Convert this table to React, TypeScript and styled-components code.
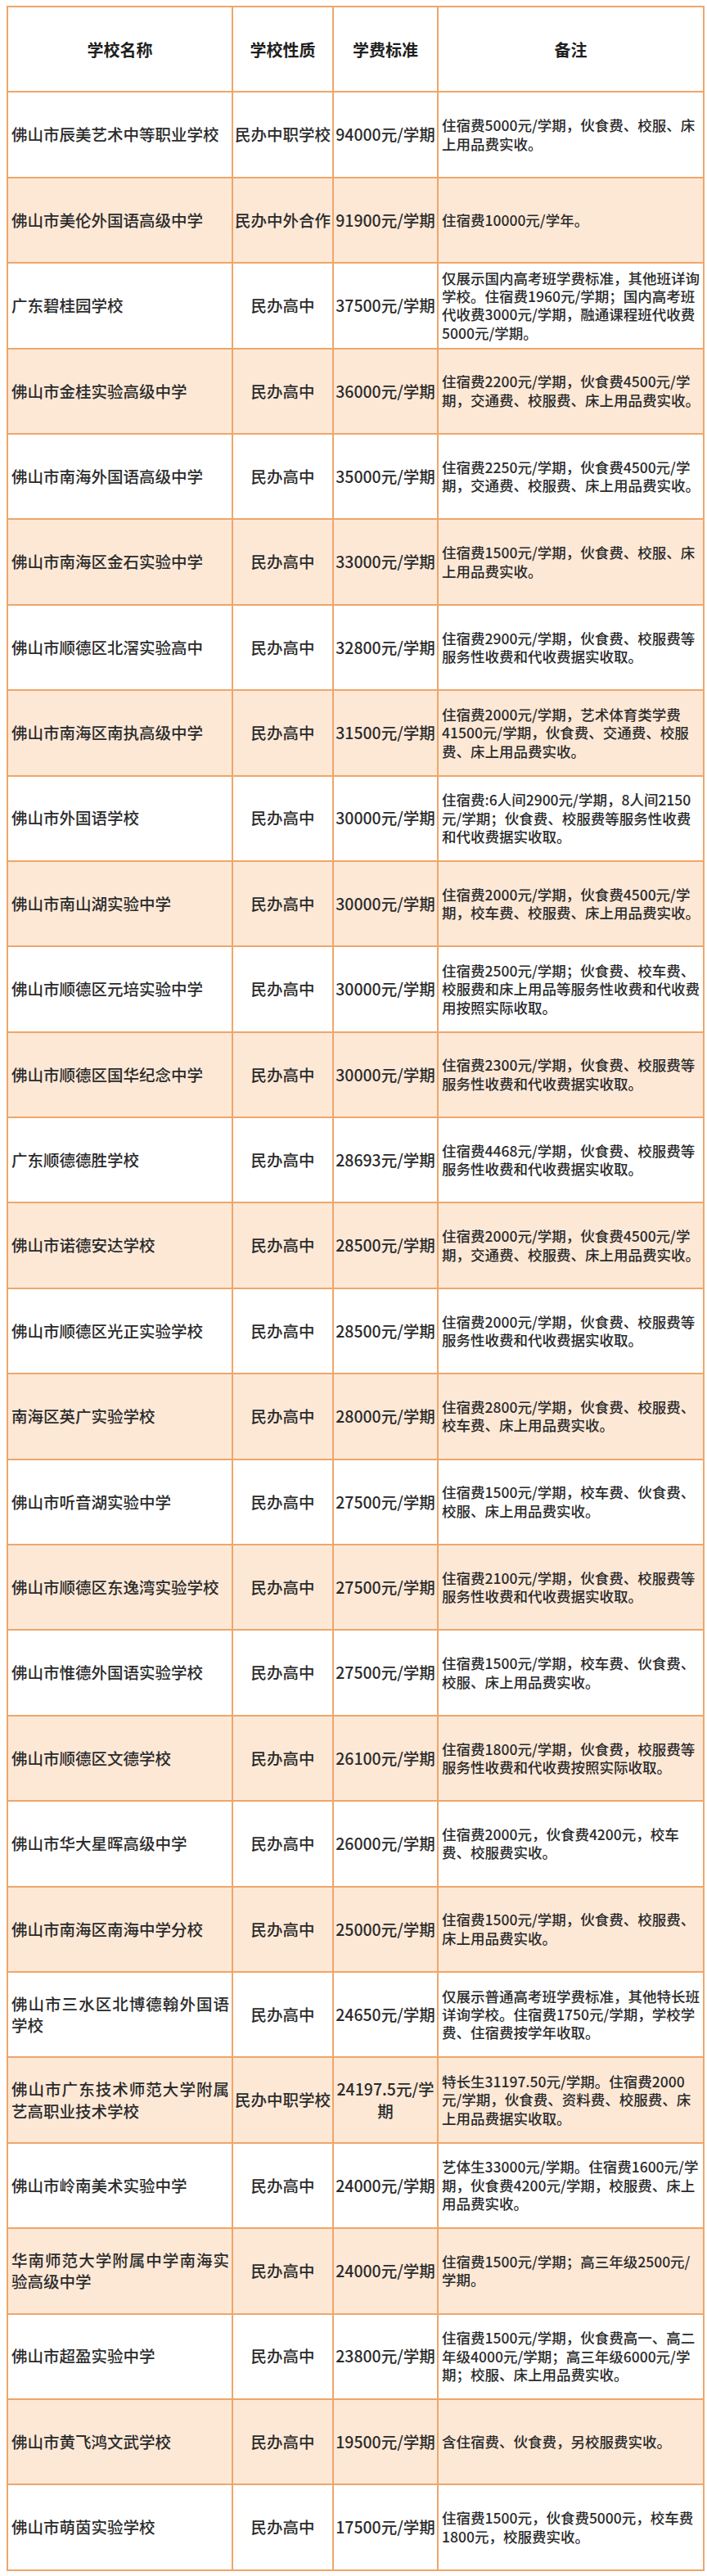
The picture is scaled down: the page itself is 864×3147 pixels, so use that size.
import styled, { createGlobalStyle } from "styled-components";

type School = {
    name: string;
    kind: string;
    fee: string;
    note: string;
};

const schools: School[] = [
    { name: "佛山市辰美艺术中等职业学校", kind: "民办中职学校", fee: "94000元/学期", note: "住宿费5000元/学期，伙食费、校服、床上用品费实收。" },
    { name: "佛山市美伦外国语高级中学", kind: "民办中外合作", fee: "91900元/学期", note: "住宿费10000元/学年。" },
    { name: "广东碧桂园学校", kind: "民办高中", fee: "37500元/学期", note: "仅展示国内高考班学费标准，其他班详询学校。住宿费1960元/学期；国内高考班代收费3000元/学期，融通课程班代收费5000元/学期。" },
    { name: "佛山市金桂实验高级中学", kind: "民办高中", fee: "36000元/学期", note: "住宿费2200元/学期，伙食费4500元/学期，交通费、校服费、床上用品费实收。" },
    { name: "佛山市南海外国语高级中学", kind: "民办高中", fee: "35000元/学期", note: "住宿费2250元/学期，伙食费4500元/学期，交通费、校服费、床上用品费实收。" },
    { name: "佛山市南海区金石实验中学", kind: "民办高中", fee: "33000元/学期", note: "住宿费1500元/学期，伙食费、校服、床上用品费实收。" },
    { name: "佛山市顺德区北滘实验高中", kind: "民办高中", fee: "32800元/学期", note: "住宿费2900元/学期，伙食费、校服费等服务性收费和代收费据实收取。" },
    { name: "佛山市南海区南执高级中学", kind: "民办高中", fee: "31500元/学期", note: "住宿费2000元/学期，艺术体育类学费41500元/学期，伙食费、交通费、校服费、床上用品费实收。" },
    { name: "佛山市外国语学校", kind: "民办高中", fee: "30000元/学期", note: "住宿费:6人间2900元/学期，8人间2150元/学期；伙食费、校服费等服务性收费和代收费据实收取。" },
    { name: "佛山市南山湖实验中学", kind: "民办高中", fee: "30000元/学期", note: "住宿费2000元/学期，伙食费4500元/学期，校车费、校服费、床上用品费实收。" },
    { name: "佛山市顺德区元培实验中学", kind: "民办高中", fee: "30000元/学期", note: "住宿费2500元/学期；伙食费、校车费、校服费和床上用品等服务性收费和代收费用按照实际收取。" },
    { name: "佛山市顺德区国华纪念中学", kind: "民办高中", fee: "30000元/学期", note: "住宿费2300元/学期，伙食费、校服费等服务性收费和代收费据实收取。" },
    { name: "广东顺德德胜学校", kind: "民办高中", fee: "28693元/学期", note: "住宿费4468元/学期，伙食费、校服费等服务性收费和代收费据实收取。" },
    { name: "佛山市诺德安达学校", kind: "民办高中", fee: "28500元/学期", note: "住宿费2000元/学期，伙食费4500元/学期，交通费、校服费、床上用品费实收。" },
    { name: "佛山市顺德区光正实验学校", kind: "民办高中", fee: "28500元/学期", note: "住宿费2000元/学期，伙食费、校服费等服务性收费和代收费据实收取。" },
    { name: "南海区英广实验学校", kind: "民办高中", fee: "28000元/学期", note: "住宿费2800元/学期，伙食费、校服费、校车费、床上用品费实收。" },
    { name: "佛山市听音湖实验中学", kind: "民办高中", fee: "27500元/学期", note: "住宿费1500元/学期，校车费、伙食费、校服、床上用品费实收。" },
    { name: "佛山市顺德区东逸湾实验学校", kind: "民办高中", fee: "27500元/学期", note: "住宿费2100元/学期，伙食费、校服费等服务性收费和代收费据实收取。" },
    { name: "佛山市惟德外国语实验学校", kind: "民办高中", fee: "27500元/学期", note: "住宿费1500元/学期，校车费、伙食费、校服、床上用品费实收。" },
    { name: "佛山市顺德区文德学校", kind: "民办高中", fee: "26100元/学期", note: "住宿费1800元/学期，伙食费，校服费等服务性收费和代收费按照实际收取。" },
    { name: "佛山市华大星晖高级中学", kind: "民办高中", fee: "26000元/学期", note: "住宿费2000元，伙食费4200元，校车费、校服费实收。" },
    { name: "佛山市南海区南海中学分校", kind: "民办高中", fee: "25000元/学期", note: "住宿费1500元/学期，伙食费、校服费、床上用品费实收。" },
    { name: "佛山市三水区北博德翰外国语学校", kind: "民办高中", fee: "24650元/学期", note: "仅展示普通高考班学费标准，其他特长班详询学校。住宿费1750元/学期，学校学费、住宿费按学年收取。" },
    { name: "佛山市广东技术师范大学附属艺高职业技术学校", kind: "民办中职学校", fee: "24197.5元/学期", note: "特长生31197.50元/学期。住宿费2000元/学期，伙食费、资料费、校服费、床上用品费据实收取。" },
    { name: "佛山市岭南美术实验中学", kind: "民办高中", fee: "24000元/学期", note: "艺体生33000元/学期。住宿费1600元/学期，伙食费4200元/学期，校服费、床上用品费实收。" },
    { name: "华南师范大学附属中学南海实验高级中学", kind: "民办高中", fee: "24000元/学期", note: "住宿费1500元/学期；高三年级2500元/学期。" },
    { name: "佛山市超盈实验中学", kind: "民办高中", fee: "23800元/学期", note: "住宿费1500元/学期，伙食费高一、高二年级4000元/学期；高三年级6000元/学期；校服、床上用品费实收。" },
    { name: "佛山市黄飞鸿文武学校", kind: "民办高中", fee: "19500元/学期", note: "含住宿费、伙食费，另校服费实收。" },
    { name: "佛山市萌茵实验学校", kind: "民办高中", fee: "17500元/学期", note: "住宿费1500元，伙食费5000元，校车费1800元，校服费实收。" },
];

const GlobalStyle = createGlobalStyle`
    html, body {
        margin: 0;
        padding: 0;
        background: #ffffff;
    }
    body {
        font-family: "Noto Sans CJK SC", "Noto Sans", sans-serif;
        color: #2b2b2b;
    }
`;

const Page = styled.div`
    width: 864px;
    padding: 7px 5px 8px 8px;
    box-sizing: border-box;
`;

const Table = styled.table`
    width: 851px;
    border-collapse: collapse;
    table-layout: fixed;
    border: 2px solid #eea66a;
`;

const Row = styled.tr<{ $shaded?: boolean }>`
    height: 104.4px;
    background: ${({ $shaded }) => ($shaded ? "#fde8d6" : "#ffffff")};
`;

const HeadCell = styled.th`
    border: 2px solid #eea66a;
    padding: 0 3px;
    font-size: 20px;
    font-weight: 700;
    color: #1f1f1f;
    text-align: center;
    vertical-align: middle;
`;

const NameCell = styled.td`
    border: 2px solid #eea66a;
    padding: 0 3px 0 4px;
    font-size: 19.5px;
    font-weight: 500;
    line-height: 26.5px;
    text-align: justify;
    vertical-align: middle;
`;

const MidCell = styled.td`
    border: 2px solid #eea66a;
    padding: 0 1px;
    font-size: 19.5px;
    font-weight: 500;
    line-height: 26.5px;
    text-align: center;
    vertical-align: middle;
`;

const NoteCell = styled.td`
    border: 2px solid #eea66a;
    padding: 0 3px 0 4px;
    font-size: 17.5px;
    font-weight: 500;
    line-height: 22.4px;
    text-align: left;
    vertical-align: middle;
`;

const colWidths = [275, 123, 128, 325];

export default function App() {
    return (
        <>
            <GlobalStyle />
            <Page>
                <Table>
                    <colgroup>
                        {colWidths.map((w, i) => (
                            <col key={i} style={{ width: w }} />
                        ))}
                    </colgroup>
                    <thead>
                        <Row>
                            <HeadCell>学校名称</HeadCell>
                            <HeadCell>学校性质</HeadCell>
                            <HeadCell>学费标准</HeadCell>
                            <HeadCell>备注</HeadCell>
                        </Row>
                    </thead>
                    <tbody>
                        {schools.map((s, i) => (
                            <Row key={s.name} $shaded={i % 2 === 1}>
                                <NameCell>{s.name}</NameCell>
                                <MidCell>{s.kind}</MidCell>
                                <MidCell>{s.fee}</MidCell>
                                <NoteCell>{s.note}</NoteCell>
                            </Row>
                        ))}
                    </tbody>
                </Table>
            </Page>
        </>
    );
}
